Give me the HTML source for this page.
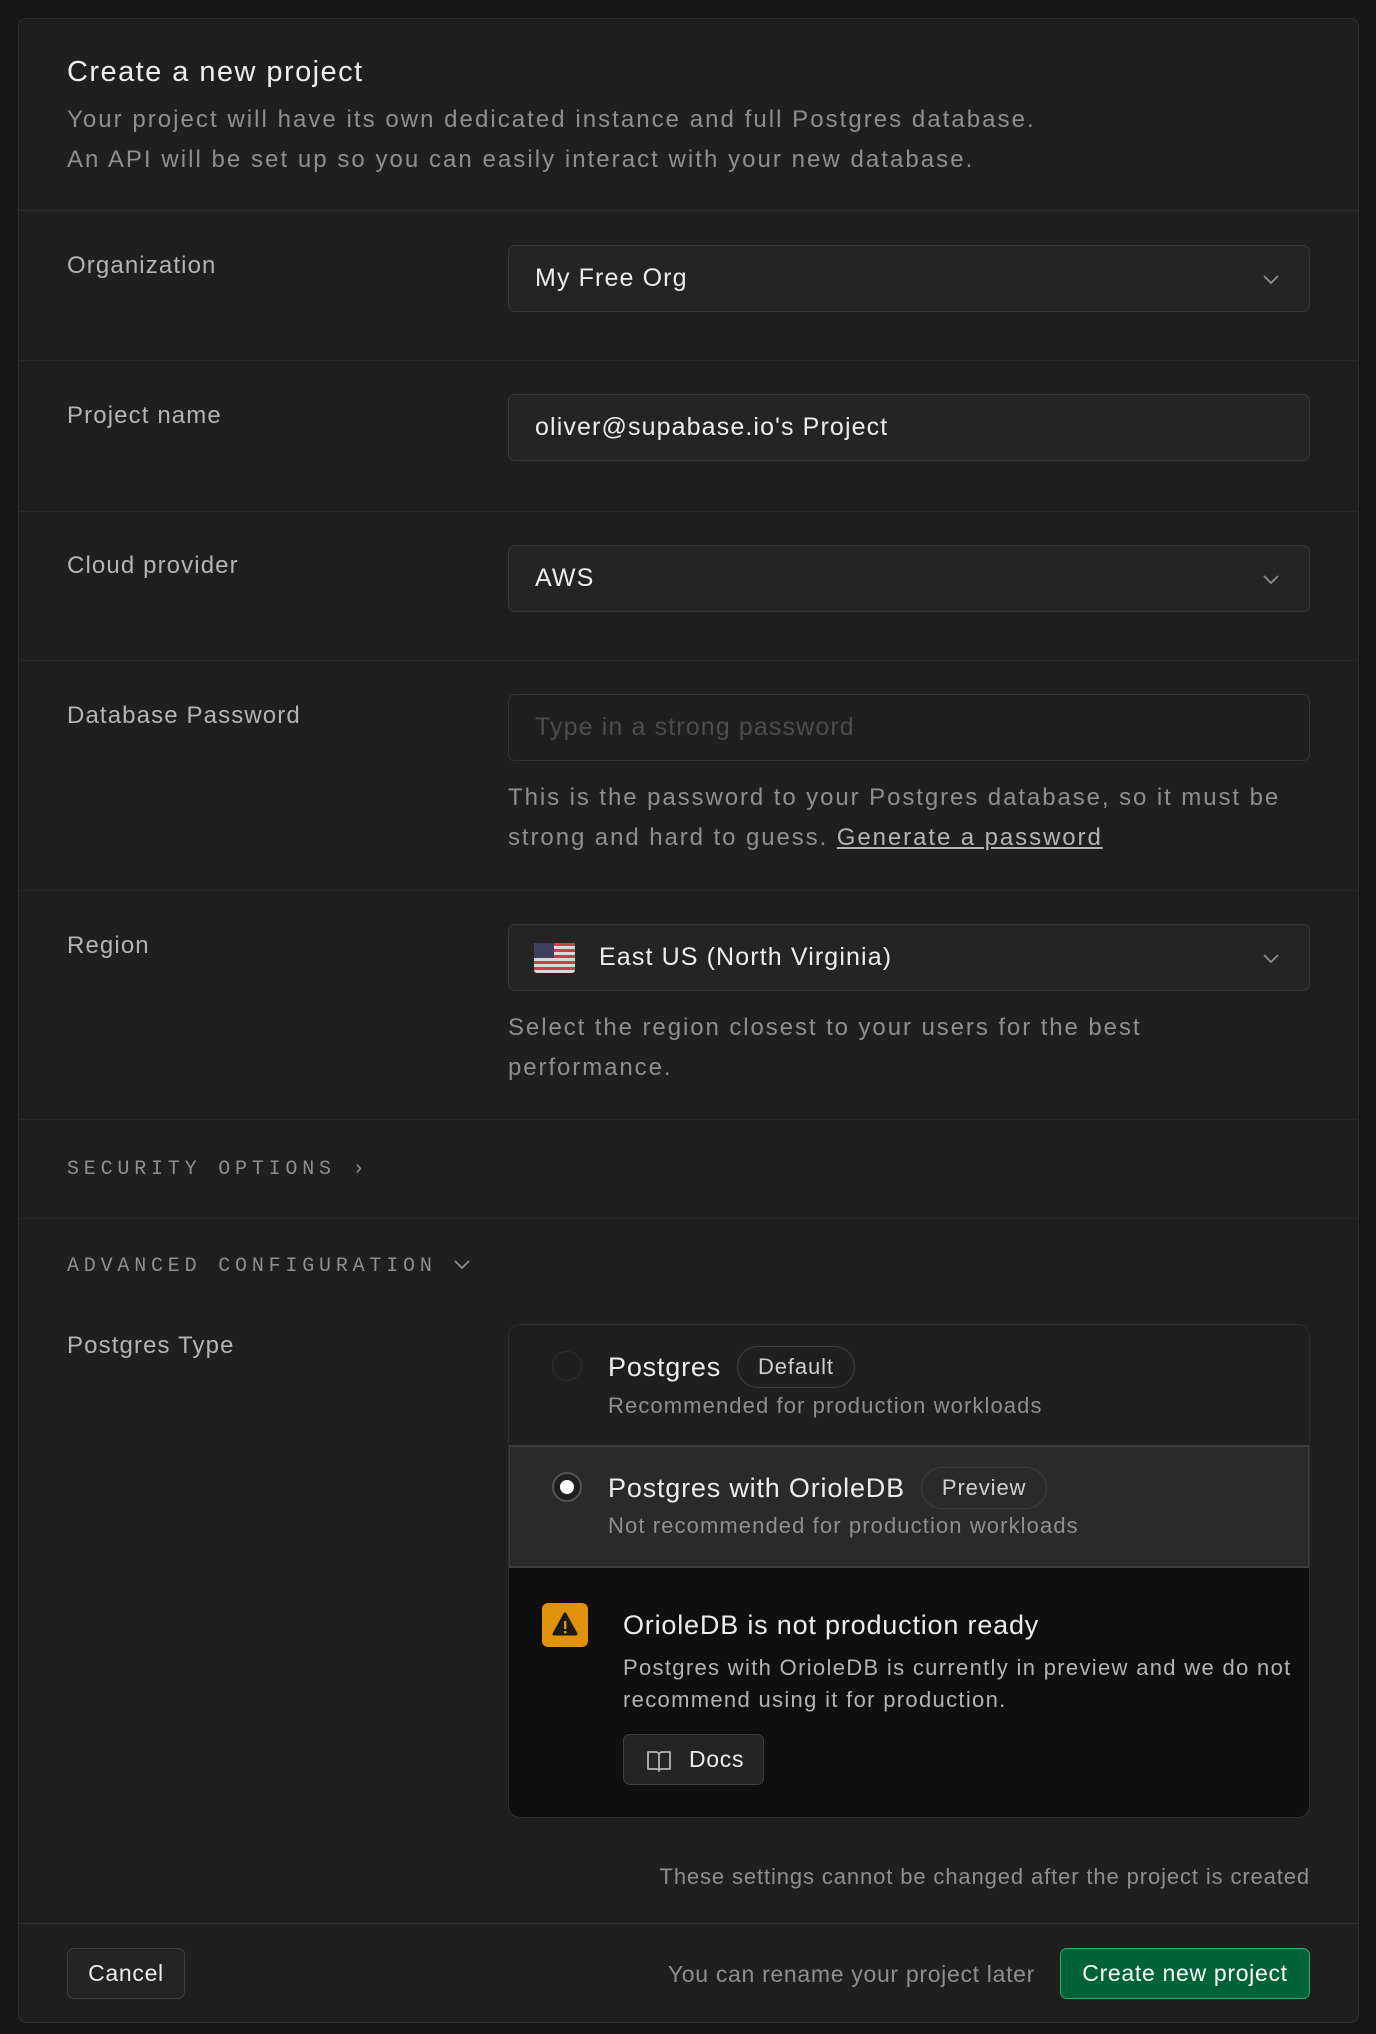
<!DOCTYPE html>
<html><head><meta charset="utf-8"><style>
*{box-sizing:border-box;margin:0;padding:0}
body{width:1376px;height:2034px;background:#171717;font-family:"Liberation Sans",sans-serif;position:relative;overflow:hidden;color:#ededed;letter-spacing:0.07em}
.card{position:absolute;left:18px;top:18px;width:1341px;height:2005px;background:#1f1f1f;border:1px solid #2e2e2e;border-radius:8px}
.a{position:absolute;white-space:nowrap}
.hr{position:absolute;left:18px;width:1341px;height:1px;background:#292929}
.lbl{position:absolute;left:67px;font-size:24px;color:#b4b4b4}
.inp{position:absolute;left:508px;width:802px;height:67px;background:#242424;border:1px solid #363636;border-radius:7px;font-size:25px;color:#ededed;padding-left:26px;line-height:65px}
.chev{position:absolute;right:28px;top:24px}
.help{position:absolute;left:508px;font-size:24px;color:#8f8f8f;line-height:40px}
.mono{position:absolute;left:67px;font-family:"Liberation Mono",monospace;font-size:20px;letter-spacing:4.8px;color:#8f8f8f}
.row{position:absolute;left:608px;display:flex;align-items:center;gap:16px;font-size:27px;color:#ededed;letter-spacing:0.03em;white-space:nowrap}
.badge{border:1px solid #3e3e3e;border-radius:22px;font-size:22px;color:#d0d0d0;text-align:center;letter-spacing:0.04em;height:42px;line-height:40px;padding:0 20px}
</style></head><body>
<div class="card"></div>
<div class="a" style="left:67px;top:56px;font-size:29px;color:#ededed;letter-spacing:0.05em">Create a new project</div>
<div class="a" style="left:67px;top:100px;font-size:24px;color:#8f8f8f;line-height:40px;letter-spacing:0.085em">Your project will have its own dedicated instance and full Postgres database.<br>An API will be set up so you can easily interact with your new database.</div>
<div class="hr" style="top:210px;background:#2e2e2e"></div>

<div class="lbl" style="top:252px">Organization</div>
<div class="inp" style="top:245px">My Free Org<svg class="chev" width="20" height="18" viewBox="0 0 20 18"><path d="M3 6l7 7 7-7" stroke="#8f8f8f" stroke-width="1.8" fill="none"/></svg></div>
<div class="hr" style="top:360px"></div>

<div class="lbl" style="top:402px">Project name</div>
<div class="inp" style="top:394px">oliver@supabase.io's Project</div>
<div class="hr" style="top:511px"></div>

<div class="lbl" style="top:552px">Cloud provider</div>
<div class="inp" style="top:545px">AWS<svg class="chev" width="20" height="18" viewBox="0 0 20 18"><path d="M3 6l7 7 7-7" stroke="#8f8f8f" stroke-width="1.8" fill="none"/></svg></div>
<div class="hr" style="top:660px"></div>

<div class="lbl" style="top:702px">Database Password</div>
<div class="inp" style="top:694px;color:#4d4d4d;background:#1f1f1f">Type in a strong password</div>
<div class="help" style="top:778px;letter-spacing:0.08em">This is the password to your Postgres database, so it must be<br>strong and hard to guess. <span style="color:#b4b4b4;text-decoration:underline">Generate a password</span></div>
<div class="hr" style="top:890px"></div>

<div class="lbl" style="top:932px">Region</div>
<div class="inp" style="top:924px;padding-left:90px">East US (North Virginia)<svg class="chev" width="20" height="18" viewBox="0 0 20 18"><path d="M3 6l7 7 7-7" stroke="#8f8f8f" stroke-width="1.8" fill="none"/></svg>
<svg style="position:absolute;left:25px;top:18px" width="41" height="30" viewBox="0 0 41 30"><rect width="41" height="30" rx="3" fill="#d9d9d9"/><g fill="#c8404a"><rect y="0" width="41" height="3"/><rect y="6" width="41" height="3"/><rect y="12" width="41" height="3"/><rect y="18" width="41" height="3"/><rect y="24" width="41" height="3"/></g><rect width="20" height="15" fill="#3c3f5e"/></svg></div>
<div class="help" style="top:1008px;letter-spacing:0.08em">Select the region closest to your users for the best<br>performance.</div>
<div class="hr" style="top:1119px"></div>

<div class="mono" style="top:1158px">SECURITY OPTIONS <span style="letter-spacing:0">›</span></div>
<div class="hr" style="top:1218px"></div>
<div class="mono" style="top:1255px">ADVANCED CONFIGURATION <svg width="18" height="14" viewBox="0 0 18 14"><path d="M2 4l7 7 7-7" stroke="#8f8f8f" stroke-width="1.8" fill="none"/></svg></div>

<div class="lbl" style="top:1332px">Postgres Type</div>
<div class="a" style="left:508px;top:1324px;width:802px;height:494px;border:1px solid #2e2e2e;border-radius:12px;background:#0f0f0f;overflow:hidden">
 <div style="position:absolute;left:0;top:0;width:800px;height:120px;background:#1f1f1f"></div>
 <div style="position:absolute;left:-1px;top:120px;width:802px;height:123px;background:#2a2a2a;border:2px solid #3e3e3e"></div>
</div>
<div class="a" style="left:552px;top:1351px;width:30px;height:30px;border-radius:50%;border:1.5px solid #2e2e2e"></div>
<div class="row" style="top:1346px"><span>Postgres</span><span class="badge">Default</span></div>
<div class="a" style="left:608px;top:1393px;font-size:22px;color:#8f8f8f;letter-spacing:0.05em">Recommended for production workloads</div>
<div class="a" style="left:552px;top:1472px;width:30px;height:30px;border-radius:50%;border:2px solid #555;background:#1f1f1f"><div style="position:absolute;left:6px;top:6px;width:14px;height:14px;border-radius:50%;background:#fff"></div></div>
<div class="row" style="top:1467px"><span>Postgres with OrioleDB</span><span class="badge">Preview</span></div>
<div class="a" style="left:608px;top:1513px;font-size:22px;color:#8f8f8f;letter-spacing:0.05em">Not recommended for production workloads</div>
<div class="a" style="left:542px;top:1603px;width:46px;height:44px;background:#e0920a;border-radius:6px"><svg width="46" height="44" viewBox="0 0 46 44"><path d="M23 11L34 31H12Z" fill="#1a1a1a" stroke="#1a1a1a" stroke-width="3" stroke-linejoin="round"/><rect x="22" y="18" width="2.4" height="8" fill="#e0920a"/><rect x="22" y="28" width="2.4" height="2.4" fill="#e0920a"/></svg></div>
<div class="a" style="left:623px;top:1610px;font-size:27px;color:#ededed;letter-spacing:0.03em">OrioleDB is not production ready</div>
<div class="a" style="left:623px;top:1652px;font-size:22px;color:#b4b4b4;line-height:32px;letter-spacing:0.06em">Postgres with OrioleDB is currently in preview and we do not<br>recommend using it for production.</div>
<div class="a" style="left:623px;top:1734px;width:141px;height:51px;border:1px solid #3e3e3e;border-radius:7px;background:#242424;font-size:23px;color:#ededed;line-height:49px;padding-left:65px;letter-spacing:0.03em">Docs<svg style="position:absolute;left:22px;top:14px" width="26" height="24" viewBox="0 0 26 24"><path d="M2 3h8a3 3 0 0 1 3 3v16a2 2 0 0 0-2-2H2zM24 3h-8a3 3 0 0 0-3 3v16a2 2 0 0 1 2-2h9z" stroke="#b4b4b4" stroke-width="1.8" fill="none" stroke-linejoin="round"/></svg></div>

<div class="a" style="right:66px;top:1864px;font-size:22px;color:#8f8f8f;letter-spacing:0.04em">These settings cannot be changed after the project is created</div>
<div class="hr" style="top:1923px;background:#2e2e2e"></div>
<div class="a" style="left:67px;top:1948px;width:118px;height:51px;border:1px solid #3e3e3e;border-radius:7px;background:#242424;font-size:23px;color:#ededed;text-align:center;line-height:49px;letter-spacing:0.03em">Cancel</div>
<div class="a" style="right:341px;top:1961px;font-size:23px;color:#8f8f8f;letter-spacing:0.03em">You can rename your project later</div>
<div class="a" style="left:1060px;top:1948px;width:250px;height:51px;border:1px solid #2fae6a;border-radius:7px;background:#006239;font-size:23px;color:#fff;text-align:center;line-height:49px;letter-spacing:0.03em">Create new project</div>
</body></html>
